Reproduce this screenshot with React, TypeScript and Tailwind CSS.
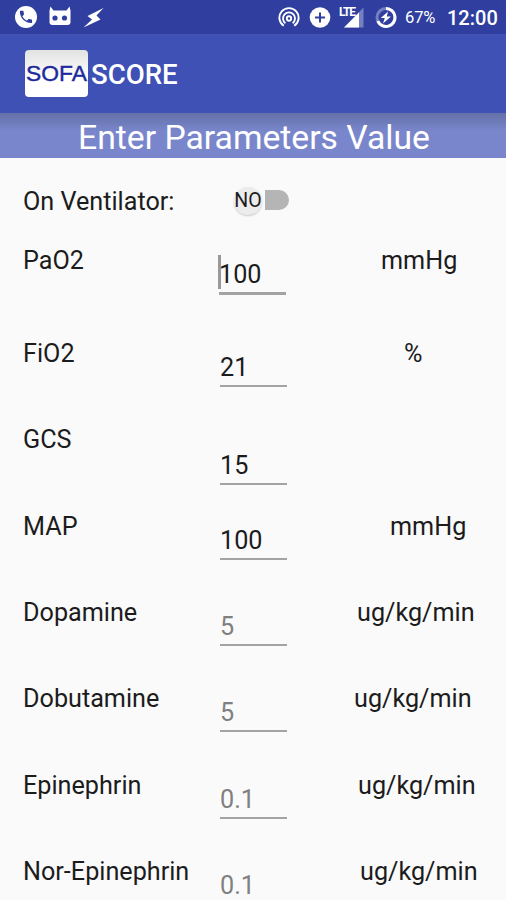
import { useState } from 'react'

type Param = {
    name: string
    value?: string
    hint?: string
    unit?: string
    row: string
    field: string
    unitPad: string
}

const params: Param[] = [
    { name: 'PaO2', value: '100', unit: 'mmHg', row: 'h-[93px]', field: 'mt-[13px] -ml-px', unitPad: 'pl-[34px]' },
    { name: 'FiO2', value: '21', unit: '%', row: 'h-[86px]', field: 'mt-[13px]', unitPad: 'pl-[57px]' },
    { name: 'GCS', value: '15', row: 'h-[87px]', field: 'mt-[25px]', unitPad: 'pl-9' },
    { name: 'MAP', value: '100', unit: 'mmHg', row: 'h-[86px]', field: 'mt-[13px]', unitPad: 'pl-[43px]' },
    { name: 'Dopamine', hint: '5', unit: 'ug/kg/min', row: 'h-[86px]', field: 'mt-[13px]', unitPad: 'pl-[10px]' },
    { name: 'Dobutamine', hint: '5', unit: 'ug/kg/min', row: 'h-[87px]', field: 'mt-[13px]', unitPad: 'pl-[7px]' },
    { name: 'Epinephrin', hint: '0.1', unit: 'ug/kg/min', row: 'h-[86px]', field: 'mt-[13px]', unitPad: 'pl-[11px]' },
    { name: 'Nor-Epinephrin', hint: '0.1', unit: 'ug/kg/min', row: 'h-[86px]', field: 'mt-[13px]', unitPad: 'pl-[13px]' },
]

function StatusBar() {
    return (
        <div className="flex h-[34px] shrink-0 items-center bg-[#303f9f] text-white">
            <svg className="ml-3.5" width="24" height="24" viewBox="0 0 24 24">
                <circle cx="12" cy="12" r="11" fill="#fff" />
                <path transform="translate(3.8 3.8) scale(.68)" fill="#303f9f" d="M6.600 10.800c1.400 2.800 3.800 5.100 6.600 6.600l2.200-2.200c.3-.3.7-.4 1-.2 1.100.4 2.300.6 3.600.6.6 0 1 .4 1 1V20c0 .6-.4 1-1 1C10.600 21 3 13.400 3 4c0-.6.4-1 1-1h3.500c.6 0 1 .4 1 1 0 1.200.2 2.500.6 3.600.1.400 0 .700-.2 1z" />
            </svg>
            <svg className="ml-2.5" width="24" height="24" viewBox="0 0 24 24">
                <path fill="#fff" d="M2.500 1.500L5.500 5.500h13l3-4 1 4V17c0 2-1 3-3 3H4.500c-2 0-3-1-3-3V5.500z" />
                <circle cx="7" cy="13" r="2.600" fill="#303f9f" />
                <circle cx="16.500" cy="13" r="2.600" fill="#303f9f" />
            </svg>
            <svg className="ml-2.5" width="24" height="24" viewBox="0 0 24 24">
                <path fill="#fff" d="M21.500 3L5.500 11l4.500 3.500L1.500 22.500 18.500 14.500l-4-4z" />
            </svg>
            <svg className="ml-auto" width="22" height="24" viewBox="0 0 22 24" fill="none" stroke="#fff" strokeWidth="1.900">
                <path d="M5.800 20.800a9.600 9.600 0 1 1 10.400 0" />
                <path d="M7.400 18.200a6 6 0 1 1 7.200 0" />
                <circle cx="11" cy="13.500" r="2.200" />
            </svg>
            <svg className="ml-[9px]" width="22" height="24" viewBox="0 0 22 24">
                <circle cx="11" cy="12.500" r="10.300" fill="#fff" />
                <path d="M11 7.500v10M6 12.500h10" stroke="#303f9f" strokeWidth="2" />
            </svg>
            <div className="relative ml-2 h-6 w-[26px]">
                <span className="absolute top-px left-0 text-[12px] leading-3 font-bold tracking-[-1.2px]">LTE</span>
                <svg width="26" height="24" viewBox="0 0 26 24">
                    <path d="M24.500 2.500v20H5z" fill="#7580c0" />
                    <path d="M20 7.500v15H5z" fill="#fff" />
                </svg>
            </div>
            <svg className="ml-[10px]" width="22" height="24" viewBox="0 0 22 24">
                <circle cx="11" cy="12.500" r="9" fill="none" stroke="#7580c0" strokeWidth="3" />
                <path d="M11 3.500a9 9 0 1 1-8.200 12.700" fill="none" stroke="#fff" strokeWidth="3" />
                <path d="M13 6.500L5.800 13h4L8 18.500l8-7h-4.200z" fill="#fff" />
            </svg>
            <span className="ml-2 w-[42px] pt-0.5 text-[16.500px] tracking-[-0.1px]">67%</span>
            <span className="mr-[9px] w-[50px] pt-0.5 text-[20px] leading-6 font-medium whitespace-nowrap">12:00</span>
        </div>
    )
}

function Row({ param, focused }: { param: Param; focused?: boolean }) {
    return (
        <div className={'grid shrink-0 grid-cols-[197px_127px_1fr] items-start ' + param.row}>
            <label className="whitespace-nowrap" htmlFor={param.name}>{param.name}</label>
            <div className={'relative w-[67px] ' + param.field}>
                <input
                    className={'block w-full border-[#a3a3a3] bg-transparent p-0 outline-none placeholder:text-[#808080] ' + (focused ? 'h-[36px] border-b-3 pb-[3px]' : 'h-[35px] border-b-2 pb-[3px]')}
                    id={param.name}
                    type="text"
                    defaultValue={param.value}
                    placeholder={param.hint}
                />
                {focused && <span className="absolute -top-1 -left-px h-[34px] w-[3px] bg-[#999999]" />}
            </div>
            <span className={'whitespace-nowrap ' + param.unitPad}>{param.unit}</span>
        </div>
    )
}

export default function App() {
    const [ventilator, setVentilator] = useState(false)

    return (
        <div className="flex h-[900px] w-[506px] flex-col overflow-hidden bg-[#fafafa] font-['Roboto',sans-serif] text-[25.2px] leading-[30px] text-[#1c1c1c]">
            <StatusBar />
            <header className="flex h-[79px] shrink-0 items-center bg-[#3f51b5] pl-[25px]">
                <div className="flex h-[47px] w-[63px] items-center justify-center rounded-[4px] bg-linear-to-b from-[#e2e2e2] to-white to-60% pb-0.5 font-['Liberation_Sans',sans-serif] text-[22.800px] text-[#1d2a9c] [-webkit-text-stroke:0.4px_#1d2a9c]">
                    SOFA
                </div>
                <h1 className="ml-[3px] pt-0.5 text-[27.600px] font-medium text-white">SCORE</h1>
            </header>
            <div className="flex h-[45px] shrink-0 items-center justify-center bg-[#7986cb] bg-linear-to-b from-[#6471a9] to-[#7986cb] to-40% pt-1 pl-0.5 text-[33.700px] text-white">
                Enter Parameters Value
            </div>
            <main className="flex flex-col pt-[29px] pl-[23px]">
                <div className="flex h-[59px] shrink-0 items-start">
                    <span className="w-[210px]">On Ventilator:</span>
                    <button
                        className="relative -mt-px flex h-7 w-14 items-center"
                        type="button"
                        onClick={() => setVentilator(!ventilator)}
                    >
                        <span className="ml-8 h-5 w-6 rounded-r-full bg-[#b5b5b5]" />
                        <span className="absolute top-px left-px flex size-7 items-center justify-center rounded-full bg-[#ececec] text-[19.500px] shadow-[0_1px_2px_#00000030]">
                            {ventilator ? 'YES' : 'NO'}
                        </span>
                    </button>
                </div>
                {params.map((param, i) => (
                    <Row key={param.name} param={param} focused={i === 0} />
                ))}
            </main>
        </div>
    )
}
